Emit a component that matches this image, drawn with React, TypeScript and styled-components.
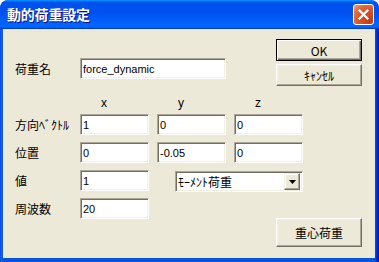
import React from 'react';
import styled, { createGlobalStyle } from 'styled-components';

const GlobalStyle = createGlobalStyle`
  html, body {
    margin: 0;
    padding: 0;
    background: #ffffff;
  }
  body {
    font-family: "Noto Sans CJK JP", "Liberation Sans", sans-serif;
    font-size: 12px;
  }
  * {
    box-sizing: border-box;
  }
`;

const Window = styled.div`
  width: 379px;
  height: 262px;
  display: flex;
  flex-direction: column;
  border-radius: 8px 8px 0 0;
  overflow: hidden;
  background: #0a4fe0;
`;

const TitleBar = styled.div`
  height: 29px;
  flex: none;
  display: flex;
  align-items: center;
  justify-content: space-between;
  padding: 0 5px 0 7px;
  border-radius: 8px 8px 0 0;
  background: linear-gradient(
    180deg,
    #0997ff,
    #0053ee 8%,
    #0050ee 40%,
    #0066ff 88%,
    #0066ff 93%,
    #005bff 95%,
    #003dd7 96%,
    #003dd7
  );
`;

const Title = styled.span`
  color: #ffffff;
  font-family: "Noto Sans CJK JP", sans-serif;
  font-size: 14px;
  font-weight: 700;
  letter-spacing: -0.2px;
  text-shadow: 1px 1px #0f1089;
  margin-top: -1px;
`;

const CloseButton = styled.div`
  width: 21px;
  height: 21px;
  border: 1px solid #ffffff;
  border-radius: 3px;
  display: flex;
  align-items: center;
  justify-content: center;
  background: radial-gradient(circle at 85% 85%, #c13a14 0, #d9542a 50%, #e36d47 75%, #f1a48a 100%);
`;

const Frame = styled.div`
  flex: 1;
  display: flex;
  padding: 0 4px 4px 3px;
  background: linear-gradient(90deg, #0831d9 0, #166aee 1px, #0855dd 3px, #0855dd calc(100% - 4px), #003bda calc(100% - 3px), #001ea0 calc(100% - 1px));
`;

const Client = styled.div`
  flex: 1;
  display: flex;
  flex-direction: column;
  background: #ece9d8;
  padding: 10px 13px 0 12px;
`;

const TopSection = styled.div`
  display: flex;
  justify-content: space-between;
  align-items: flex-start;
`;

const NameRow = styled.div`
  display: flex;
  align-items: center;
  margin-top: 19px;
`;

const Label = styled.span<{ $width?: number }>`
  width: ${p => p.$width ?? 65}px;
  color: #000000;
  font-size: 12px;
  white-space: nowrap;
`;

const ButtonStack = styled.div`
  display: flex;
  flex-direction: column;
  gap: 3px;
`;

const Button = styled.button<{ $primary?: boolean; $tall?: boolean }>`
  width: 86px;
  height: ${p => (p.$tall ? 29 : 22)}px;
  margin: 0;
  padding: 0;
  background: #ece9d8;
  color: #000000;
  font-family: "Noto Sans CJK JP", "Liberation Sans", sans-serif;
  font-size: 12px;
  border: 1px solid;
  border-color: ${p => (p.$primary ? '#000000' : '#ffffff #716f64 #716f64 #ffffff')};
  box-shadow: ${p =>
    p.$primary
      ? 'inset 1px 1px #ffffff, inset -1px -1px #716f64, inset -2px -2px #aca899'
      : 'inset -1px -1px #aca899, inset 1px 1px #f1efe2'};
`;

const Field = styled.input<{ $width?: number }>`
  width: ${p => p.$width ?? 69}px;
  height: 21px;
  margin: 0;
  padding: 1px 2px 0;
  background: #ffffff;
  color: #000000;
  font-family: "Liberation Sans", "Noto Sans CJK JP", sans-serif;
  font-size: 11px;
  border: 1px solid;
  border-color: #aca899 #ffffff #ffffff #aca899;
  box-shadow: inset 1px 1px #716f64, inset -1px -1px #f1efe2;
  outline: none;
`;

const VectorGrid = styled.div`
  display: grid;
  grid-template-columns: 57px 69px 69px 69px;
  grid-template-rows: repeat(4, 21px);
  column-gap: 8px;
  row-gap: 7px;
  align-items: center;
`;

const AxisHeader = styled.span`
  align-self: end;
  margin-bottom: -3px;
  padding-left: 21px;
  font-family: "Liberation Sans", sans-serif;
  font-size: 12px;
  line-height: 14px;
  color: #000000;
`;

const Select = styled.div`
  grid-column: 3 / 5;
  margin: 2px 0 0 18px;
  width: 128px;
  height: 21px;
  display: flex;
  align-items: center;
  justify-content: space-between;
  background: #ffffff;
  border: 1px solid;
  border-color: #aca899 #ffffff #ffffff #aca899;
  box-shadow: inset 1px 1px #716f64, inset -1px -1px #f1efe2;
  padding: 2px;
  font-size: 12px;
  color: #000000;
`;

const SelectArrow = styled.div`
  width: 16px;
  height: 17px;
  display: flex;
  align-items: center;
  justify-content: center;
  background: #ece9d8;
  border: 1px solid;
  border-color: #f1efe2 #716f64 #716f64 #f1efe2;
  box-shadow: inset -1px -1px #aca899, inset 1px 1px #ffffff;
`;

const BottomSection = styled.div`
  display: flex;
  justify-content: space-between;
  align-items: flex-start;
  margin-top: 7px;
`;

const FieldRow = styled.div`
  display: flex;
  align-items: center;
`;

const BottomButton = styled(Button)`
  margin-top: 20px;
`;

export default function App() {
  return (
    <>
      <GlobalStyle />
      <Window>
        <TitleBar>
          <Title>動的荷重設定</Title>
          <CloseButton>
            <svg width="11" height="11" viewBox="0 0 11 11">
              <path d="M1.5 1.5 L9.5 9.5 M9.5 1.5 L1.5 9.5" stroke="#ffffff" strokeWidth="2.2" strokeLinecap="square" />
            </svg>
          </CloseButton>
        </TitleBar>
        <Frame>
          <Client>
            <TopSection>
              <NameRow>
                <Label>荷重名</Label>
                <Field $width={146} value="force_dynamic" readOnly />
              </NameRow>
              <ButtonStack>
                <Button $primary>OK</Button>
                <Button>ｷｬﾝｾﾙ</Button>
              </ButtonStack>
            </TopSection>

            <VectorGrid>
              <span />
              <AxisHeader>x</AxisHeader>
              <AxisHeader>y</AxisHeader>
              <AxisHeader>z</AxisHeader>

              <Label $width={57}>方向ﾍﾞｸﾄﾙ</Label>
              <Field value="1" readOnly />
              <Field value="0" readOnly />
              <Field value="0" readOnly />

              <Label $width={57}>位置</Label>
              <Field value="0" readOnly />
              <Field value="-0.05" readOnly />
              <Field value="0" readOnly />

              <Label $width={57}>値</Label>
              <Field value="1" readOnly />
              <Select>
                <span>ﾓｰﾒﾝﾄ荷重</span>
                <SelectArrow>
                  <svg width="7" height="4" viewBox="0 0 7 4">
                    <polygon points="0,0 7,0 3.5,4" fill="#000000" />
                  </svg>
                </SelectArrow>
              </Select>
            </VectorGrid>

            <BottomSection>
              <FieldRow>
                <Label>周波数</Label>
                <Field value="20" readOnly />
              </FieldRow>
              <BottomButton $tall>重心荷重</BottomButton>
            </BottomSection>
          </Client>
        </Frame>
      </Window>
    </>
  );
}
